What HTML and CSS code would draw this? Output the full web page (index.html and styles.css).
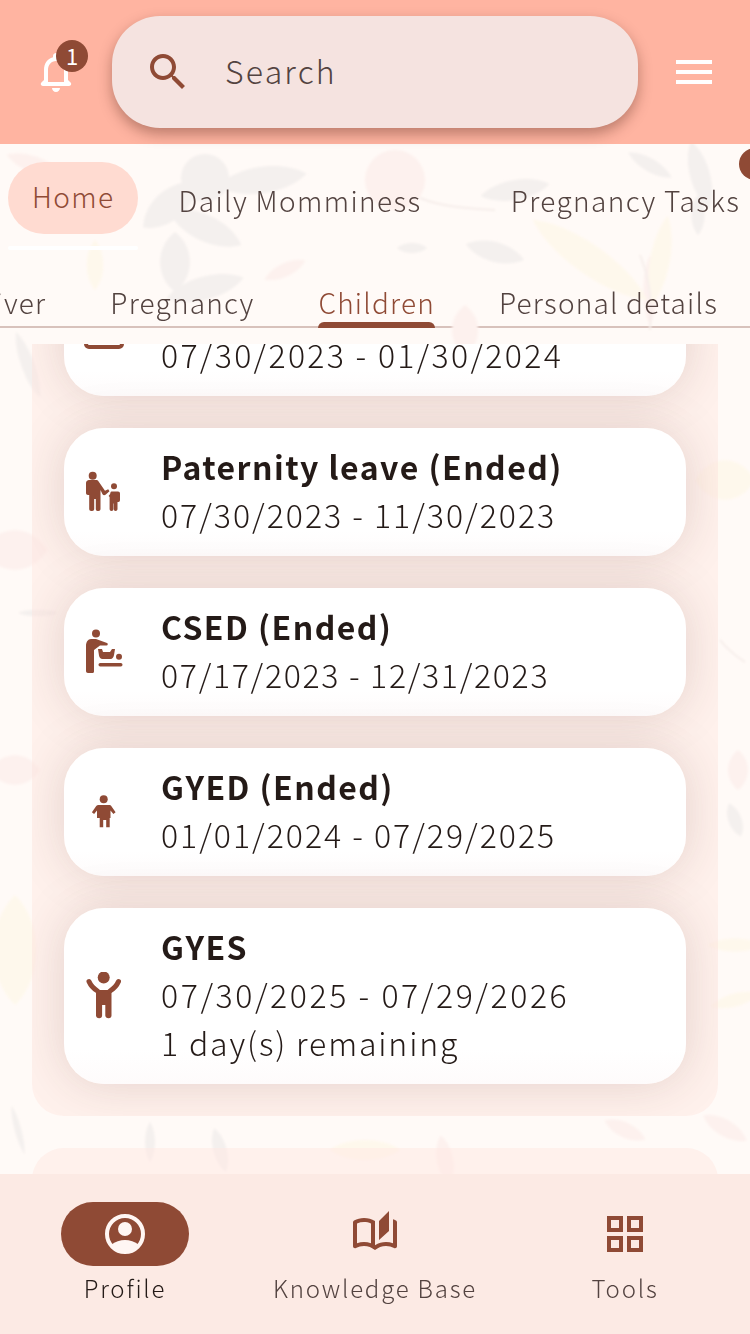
FILE: index.html
```html
<!DOCTYPE html>
<html lang="en">
<head>
  <meta charset="UTF-8">
  <meta name="viewport" content="width=device-width, initial-scale=1.0">
  <title>Profile</title>
  <link rel="stylesheet" href="styles.css">
</head>
<body>
  <div class="app">
    <!-- watercolour flowers behind everything -->
    <svg class="bg" width="750" height="1334" viewBox="0 0 750 1334">
      <defs>
        <filter id="soft"><feGaussianBlur stdDeviation="1"/></filter>
        <path id="leaf" d="M-50 0C-25-22 25-22 50 0C25 22-25 22-50 0z"/>
      </defs>
      <g filter="url(#soft)">
        <g fill="#f4f0ee">
          <circle cx="205" cy="178" r="24"/>
          <use href="#leaf" transform="translate(262 180) rotate(-8) scale(.9 .8)"/>
          <use href="#leaf" transform="translate(170 205) rotate(-40) scale(.7 .9)"/>
          <use href="#leaf" transform="translate(205 228) rotate(25) scale(.8 .8)"/>
          <use href="#leaf" transform="translate(175 262) rotate(90) scale(.6 .9)"/>
          <use href="#leaf" transform="translate(205 288) rotate(-15) scale(.8 .7)"/>
          <use href="#leaf" transform="translate(515 190) rotate(-10) scale(.7 .6)"/>
          <use href="#leaf" transform="translate(700 175) rotate(75) scale(.7 .6)"/>
          <use href="#leaf" transform="translate(650 165) rotate(30) scale(.5 .4)"/>
          <use href="#leaf" transform="translate(495 252) rotate(15) scale(.6 .6)"/>
          <use href="#leaf" transform="translate(412 248) scale(.3 .3)"/>
          <use href="#leaf" transform="translate(698 215) rotate(90) scale(.4 .4)"/>
          <use href="#leaf" transform="translate(28 365) rotate(70) scale(.7 .4)"/>
          <use href="#leaf" transform="translate(38 613) scale(.4 .2)"/>
          <use href="#leaf" transform="translate(735 820) rotate(70) scale(.35 .4)"/>
          <use href="#leaf" transform="translate(150 1142) rotate(90) scale(.4 .3)"/>
          <use href="#leaf" transform="translate(220 1150) rotate(75) scale(.45 .4)"/>
          <use href="#leaf" transform="translate(18 1130) rotate(75) scale(.5 .2)"/>
        </g>
        <g fill="#fdf1ee">
          <circle cx="395" cy="180" r="30"/>
          <use href="#leaf" transform="translate(35 165) rotate(20) scale(.6 .5)"/>
          <use href="#leaf" transform="translate(650 290) rotate(90) scale(.7 .4)"/>
          <use href="#leaf" transform="translate(285 270) rotate(-25) scale(.45 .4)"/>
          <use href="#leaf" transform="translate(465 330) rotate(90) scale(.5 .8)"/>
          <use href="#leaf" transform="translate(15 550) scale(.65 1.2)"/>
          <use href="#leaf" transform="translate(15 770) scale(.5 .9)"/>
          <use href="#leaf" transform="translate(738 770) rotate(90) scale(.4 .6)"/>
          <use href="#leaf" transform="translate(725 1128) rotate(30) scale(.5 .5)"/>
          <use href="#leaf" transform="translate(625 1130) rotate(25) scale(.45 .45)"/>
          <use href="#leaf" transform="translate(445 1160) rotate(80) scale(.5 .5)"/>
        </g>
        <g fill="#fef8ec">
          <use href="#leaf" transform="translate(590 260) rotate(35) scale(1.4 .9)"/>
          <use href="#leaf" transform="translate(660 260) rotate(100) scale(.9 .6)"/>
          <use href="#leaf" transform="translate(95 265) rotate(90) scale(.5 .5)"/>
          <use href="#leaf" transform="translate(725 480) scale(.6 1.2)"/>
          <use href="#leaf" transform="translate(15 950) rotate(90) scale(1.1 1.3)"/>
          <use href="#leaf" transform="translate(735 945) scale(.55 .4)"/>
          <use href="#leaf" transform="translate(735 1000) rotate(-15) scale(.5 .4)"/>
          <use href="#leaf" transform="translate(365 1150) scale(.7 .6)"/>
        </g>
        <path d="M420 198c20 8 40 10 75 12M640 255c10 25 12 45 10 75M720 640c8 10 14 15 25 22" fill="none" stroke="#f6eeeb" stroke-width="2"/>
      </g>
    </svg>

    <header class="topbar">
      <div class="bell">
        <svg class="icon" viewBox="0 0 24 24"><path fill="#fff" d="M19.29 17.29 18 16v-5c0-3.07-1.64-5.64-4.5-6.32V4c0-.83-.67-1.5-1.5-1.5s-1.5.67-1.5 1.5v.68C7.63 5.36 6 7.92 6 11v5l-1.29 1.29c-.63.63-.19 1.71.7 1.71h13.17c.9 0 1.34-1.08.71-1.71zM16 17H8v-6c0-2.48 1.51-4.5 4-4.5s4 2.02 4 4.5v6zm-4 5c1.1 0 2-.9 2-2h-4c0 1.1.9 2 2 2z"/></svg>
        <span class="badge">1</span>
      </div>
      <div class="search">
        <svg class="icon" viewBox="0 0 24 24"><path fill="#8f4a35" d="M15.5 14h-.79l-.28-.27C15.41 12.59 16 11.11 16 9.5 16 5.91 13.09 3 9.5 3S3 5.91 3 9.5 5.91 16 9.5 16c1.61 0 3.09-.59 4.23-1.57l.27.28v.79l5 4.99L20.49 19l-4.99-5zm-6 0C7.01 14 5 11.99 5 9.5S7.01 5 9.5 5 14 7.01 14 9.5 11.99 14 9.5 14z"/></svg>
        <span class="search-text">Search</span>
      </div>
      <svg class="icon" viewBox="0 0 24 24"><path fill="#fff" d="M3 18h18v-2H3v2zm0-5h18v-2H3v2zm0-5h18V6H3v2z"/></svg>
    </header>

    <nav class="tabs">
      <div class="tab tab-home active">Home</div>
      <div class="tab tab-daily">Daily Momminess</div>
      <div class="tab">Pregnancy Tasks</div>
      <span class="tab-dot"></span>
    </nav>

    <nav class="subtabs">
      <div class="subtab">Caregiver</div>
      <div class="subtab">Pregnancy</div>
      <div class="subtab current">Children</div>
      <div class="subtab">Personal details</div>
    </nav>

    <main class="scroll">
      <section class="panel">
        <div class="card">
          <svg class="icon" viewBox="0 0 48 48"><rect x="6" y="8" width="36" height="31" rx="3" fill="none" stroke="#8f4a35" stroke-width="4"/></svg>
          <div class="card-text">
            <div class="card-title">&nbsp;</div>
            <div class="date">07/30/2023 - 01/30/2024</div>
          </div>
        </div>
        <div class="card">
          <svg class="icon" viewBox="0 0 48 48">
            <g fill="#8f4a35">
              <circle cx="12.7" cy="7.7" r="4"/>
              <circle cx="34" cy="18.3" r="3"/>
              <path d="M9 12h7c1 0 2 .5 2.6 1.4l6.4 9.4 3.200-1.600 1.300 2-4 3.500c-1 .8-2.200.6-3-.4L20.500 22v19c0 1-.8 2-2 2h-1c-1 0-1.700-1-1.700-2V31h-1.600v10c0 1-.8 2-2 2h-1c-1.200 0-2-1-2-2V27H8c-1.200 0-2-.8-2-2V15c0-1.600 1.400-3 3-3z"/>
              <path d="M31.500 23.500h6.500c1.200 0 2 .8 2 2V32c0 1-.6 2-1.600 2h-.9v7c0 1-.8 2-2 2s-1.600-1-1.600-2v-5.500h-.4V41c0 1-.8 2-2 2s-1.900-1-1.900-2V29l-1-1 1.500-2c.4-1.500.4-2.500 1.400-2.500z"/>
            </g>
          </svg>
          <div class="card-text">
            <div class="card-title">Paternity leave (Ended)</div>
            <div class="date date-s">07/30/2023 - 11/30/2023</div>
          </div>
        </div>
        <div class="card">
          <svg class="icon" viewBox="0 0 48 48">
            <g fill="#8f4a35">
              <circle cx="16" cy="5.500" r="4"/>
              <circle cx="39" cy="28.700" r="3"/>
              <path d="M11 11h5l11 4c1.200.5 1 2.500-.5 2.500H20L14 22v21.500c0 1-.8 1.500-2 1.500H8c-1.200 0-2-.8-2-2V18c0-4 2-7 5-7z"/>
              <path d="M18 21h4l1 3h7l2-3h3l-1 6c-.3 2-1.500 4-3.500 4h-8c-2 0-3-1.500-3.500-3.500z"/>
              <rect x="18.500" y="35" width="24" height="3.500" rx="1.700"/>
            </g>
          </svg>
          <div class="card-text">
            <div class="card-title">CSED (Ended)</div>
            <div class="date date-xs">07/17/2023 - 12/31/2023</div>
          </div>
        </div>
        <div class="card">
          <svg class="icon" viewBox="0 0 48 48">
            <g fill="#8f4a35">
              <circle cx="23.700" cy="11.300" r="4"/>
              <path d="M19 17h10c1 0 2 .5 2.600 1.400l4 5.800-2.200 1.700-2.900-3.300V30h-.8v9.300h-3.500V32h-3v7.300h-3.500V30H17v-7.400l-2.900 3.300-2.200-1.700 4-5.800C16.500 17.500 18 17 19 17z"/>
            </g>
          </svg>
          <div class="card-text">
            <div class="card-title">GYED (Ended)</div>
            <div class="date date-s">01/01/2024 - 07/29/2025</div>
          </div>
        </div>
        <div class="card">
          <svg class="icon" viewBox="0 0 48 48">
            <g fill="#8f4a35">
              <circle cx="23.700" cy="5.500" r="6"/>
              <path d="M16 18h15.500v25.500c0 1.500-1 2.800-2.900 2.800s-3.300-1.300-3.300-2.800V33h-3.200v10.500c0 1.500-1 2.800-2.900 2.800S16 45 16 43.500z"/>
            </g>
            <path d="M9 9.500c1.500 3.500 4.500 7 8.500 9.500M38.500 9.500c-1.500 3.500-4.500 7-8.500 9.500" fill="none" stroke="#8f4a35" stroke-width="5" stroke-linecap="round"/>
          </svg>
          <div class="card-text">
            <div class="card-title">GYES</div>
            <div class="date date-l">07/30/2025 - 07/29/2026</div>
            <div>1 day(s) remaining</div>
          </div>
        </div>
      </section>
      <section class="panel panel-next"></section>
    </main>

    <footer class="bottomnav">
      <div class="navitem active">
        <div class="navicon">
          <svg class="icon" viewBox="0 0 24 24">
            <circle cx="12" cy="12" r="9" fill="none" stroke="#fff6f3" stroke-width="2"/>
            <circle cx="12" cy="9.500" r="3.500" fill="#fff6f3"/>
            <path fill="#fff6f3" d="M5 17.500C7 15.800 9.680 15 12 15s5 .8 7 2.500L16 20H8z"/>
          </svg>
        </div>
        <span>Profile</span>
      </div>
      <div class="navitem">
        <div class="navicon">
          <svg class="icon" viewBox="0 0 24 24"><path fill="#8f4a35" d="M22.470 5.200C22 4.960 21.510 4.760 21 4.590v12.030C19.860 16.210 18.690 16 17.500 16c-1.900 0-3.780.54-5.500 1.580V5.480C10.380 4.550 8.510 4 6.500 4 4.710 4 3.020 4.440 1.530 5.200 1.200 5.360 1 5.710 1 6.080v12.080c0 .58.47.99 1 .99.16 0 .32-.04.48-.12C3.690 18.400 5.050 18 6.500 18c2.070 0 3.980.82 5.500 2 1.520-1.180 3.430-2 5.500-2 1.450 0 2.810.4 4.020 1.040.16.08.32.12.48.12.52 0 1-.41 1-.99V6.080c0-.37-.2-.72-.53-.88zM10 16.620C8.860 16.210 7.690 16 6.500 16c-1.190 0-2.360.21-3.500.62V6.710C4.110 6.250 5.280 6 6.500 6c1.200 0 2.390.25 3.500.72v9.900zM19 .5l-5 5V15l5-4.500V.5z"/></svg>
        </div>
        <span>Knowledge Base</span>
      </div>
      <div class="navitem">
        <div class="navicon">
          <svg class="icon" viewBox="0 0 24 24"><path fill="#8f4a35" d="M3 3v8h8V3H3zm6 6H5V5h4v4zm-6 4v8h8v-8H3zm6 6H5v-4h4v4zm4-16v8h8V3h-8zm6 6h-4V5h4v4zm-6 4v8h8v-8h-8zm6 6h-4v-4h4v4z"/></svg>
        </div>
        <span>Tools</span>
      </div>
    </footer>
  </div>
</body>
</html>
```

FILE: styles.css
```css
* {
  box-sizing: border-box;
}
body {
  margin: 0;
  font-family: "Noto Sans CJK JP", "Noto Sans", sans-serif;
  font-feature-settings: "palt";
  font-weight: 300;
  color: #241a17;
}
.app {
  position: relative;
  width: 750px;
  height: 1334px;
  overflow: hidden;
  background: #fffaf7;
  display: flex;
  flex-direction: column;
}
.bg {
  position: absolute;
  top: 0;
  left: 0;
}
.icon {
  width: 48px;
  height: 48px;
  display: block;
  flex: none;
}

/* top bar */
.topbar {
  position: relative;
  height: 144px;
  flex: none;
  padding: 16px 32px;
  display: flex;
  align-items: center;
  gap: 32px;
  background: #ffb4a1;
}
.bell {
  position: relative;
}
.badge {
  position: absolute;
  top: -8px;
  left: 24px;
  width: 32px;
  height: 32px;
  border-radius: 50%;
  background: #8f4a35;
  color: #fff;
  font-size: 22px;
  font-weight: 400;
  line-height: 30px;
  text-align: center;
}
.search {
  flex: 1;
  height: 112px;
  padding-left: 32px;
  display: flex;
  align-items: center;
  gap: 33px;
  border-radius: 48px;
  background: #f5e3e0;
  box-shadow: 0 6px 14px rgba(60, 20, 10, 0.35);
}
.search-text {
  margin-bottom: 4px;
  font-size: 32px;
  letter-spacing: 2.2px;
  color: #534340;
}

/* main tabs */
.tabs {
  position: relative;
  height: 122px;
  flex: none;
  padding: 18px 0 0 8px;
  display: flex;
  align-items: flex-start;
  white-space: nowrap;
  overflow: hidden;
}
.tab {
  height: 72px;
  padding: 0 45px;
  font-size: 28px;
  line-height: 76px;
  letter-spacing: 1.4px;
  color: #534340;
}
.tab-daily {
  padding: 0 44px 0 41px;
}
.tab.active {
  position: relative;
  padding: 0 23px 0 24px;
  border-radius: 36px;
  background: #ffdbd1;
  color: #8f4a35;
  line-height: 68px;
}
.tab.active::after {
  content: "";
  position: absolute;
  left: 0;
  right: 0;
  bottom: -16px;
  height: 4px;
  border-radius: 2px;
  background: #fff;
}
.tab-dot {
  position: absolute;
  top: 4px;
  left: 739px;
  width: 32px;
  height: 32px;
  border-radius: 50%;
  background: #8f4a35;
}

/* sub tabs */
.subtabs {
  height: 62px;
  flex: none;
  padding: 18px 32px 0 0;
  display: flex;
  justify-content: flex-end;
  gap: 64px;
  white-space: nowrap;
  border-bottom: 2px solid #d8c2bc;
}
.subtab {
  position: relative;
  height: 40px;
  flex: none;
  font-size: 28px;
  line-height: 36px;
  letter-spacing: 1.2px;
  color: #534340;
}
.subtab.current {
  color: #8f4a35;
}
.subtab.current::after {
  content: "";
  position: absolute;
  left: 0;
  right: 0;
  bottom: -4px;
  height: 6px;
  border-radius: 6px 6px 0 0;
  background: #8f4a35;
}

/* scrolled content */
.scroll {
  position: relative;
  flex: 1;
  margin-top: 16px;
  overflow: hidden;
  padding: 0 32px;
}
.panel {
  margin-top: -108px;
  padding: 32px;
  display: flex;
  flex-direction: column;
  gap: 32px;
  border-radius: 32px;
  overflow: hidden;
  background: rgba(255, 232, 226, 0.5);
}
.panel-next {
  margin-top: 32px;
  height: 200px;
}
.card {
  padding: 14px 16px 18px;
  display: flex;
  align-items: center;
  gap: 33px;
  border-radius: 40px;
  background: linear-gradient(#fff 80%, #fefbfb);
  box-shadow: 0 0 48px rgba(90, 50, 40, 0.17);
}
.card .icon {
  margin-top: 4px;
}
.card-text {
  font-size: 32px;
  line-height: 48px;
  letter-spacing: 1.85px;
}
.card-title {
  font-weight: 700;
  letter-spacing: 1.45px;
}
.date {
  letter-spacing: 2.3px;
}
.date-s {
  letter-spacing: 2px;
}
.date-xs {
  letter-spacing: 1.7px;
}
.date-l {
  letter-spacing: 2.57px;
}

/* bottom nav */
.bottomnav {
  position: relative;
  height: 160px;
  flex: none;
  padding-top: 28px;
  display: grid;
  grid-template-columns: repeat(3, 1fr);
  background: #fceae4;
}
.navitem {
  display: flex;
  flex-direction: column;
  align-items: center;
  gap: 4px;
  font-size: 24px;
  line-height: 36px;
  letter-spacing: 1.8px;
  color: #534340;
}
.navicon {
  width: 128px;
  height: 64px;
  border-radius: 32px;
  display: flex;
  align-items: center;
  justify-content: center;
}
.navitem.active {
  color: #241a17;
}
.navitem.active .navicon {
  background: #8f4a35;
}
```
